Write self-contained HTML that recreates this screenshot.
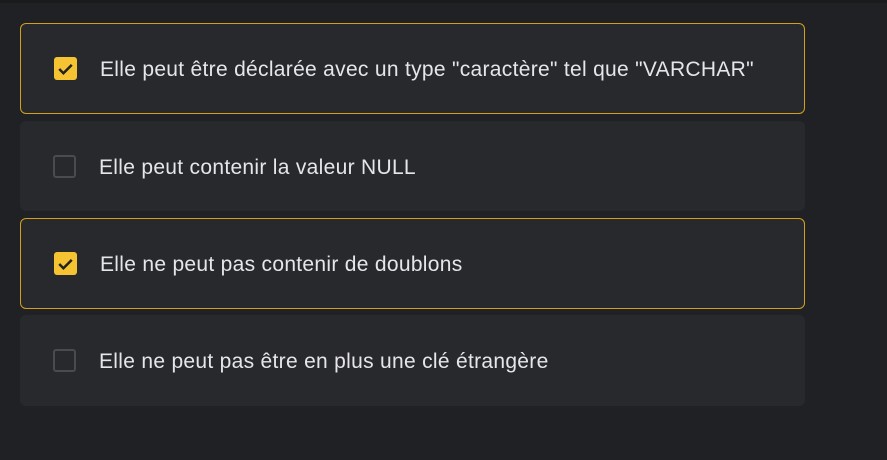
<!DOCTYPE html>
<html><head><style>
body{margin:0;width:887px;height:460px;background:#202124;font-family:"Liberation Sans",sans-serif;position:relative;overflow:hidden}
.top{position:absolute;left:0;top:0;width:887px;height:3px;background:#1a1b1d}
.card{position:absolute;left:20px;width:785px;background:#28292d;border-radius:6px;box-sizing:border-box;display:flex;align-items:center}
.sel{border:1.5px solid #d4a01c}
.cb{position:absolute;left:33px;width:23px;height:23px;border-radius:3px;box-sizing:border-box}
.on{background:#f6c433}
.off{border:2px solid #4a4b50}
.t{position:absolute;left:79px;color:#e6e6e8;font-size:21px;letter-spacing:0.3px;white-space:nowrap;padding-top:3px}
</style></head><body>
<div class="top"></div>
<div class="card sel" style="top:23px;height:91px"><div class="cb on"><svg width="23" height="23" viewBox="0 0 22 22"><path d="M5 11.5l4 4 8-8" stroke="#222" stroke-width="2.4" fill="none"/></svg></div><div class="t">Elle peut être déclarée avec un type "caractère" tel que "VARCHAR"</div></div>
<div class="card" style="top:121px;height:90px"><div class="cb off"></div><div class="t">Elle peut contenir la valeur NULL</div></div>
<div class="card sel" style="top:218px;height:91px"><div class="cb on"><svg width="23" height="23" viewBox="0 0 22 22"><path d="M5 11.5l4 4 8-8" stroke="#222" stroke-width="2.4" fill="none"/></svg></div><div class="t">Elle ne peut pas contenir de doublons</div></div>
<div class="card" style="top:315px;height:91px"><div class="cb off"></div><div class="t">Elle ne peut pas être en plus une clé étrangère</div></div>
</body></html>
